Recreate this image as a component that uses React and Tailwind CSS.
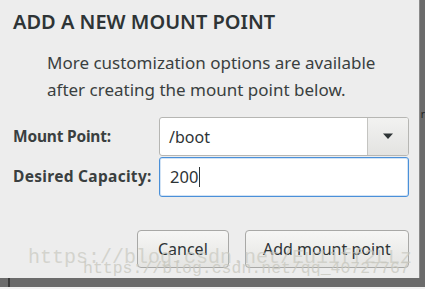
export default function App() {
  return (
    <div className="w-[425px] h-[289px] flex flex-col bg-[#6b6b6b] overflow-hidden" style={{ fontFamily: '"Noto Sans", "DejaVu Sans", sans-serif' }}>
      <div className="flex h-[278px]">
        {/* Dialog */}
        <div className="relative w-[419px] h-[278px] bg-[#ededed] text-[#2e3436]">
          <h1 className="ml-[13px] pt-[10px] text-[20px] leading-[24px] font-semibold">
            ADD A NEW MOUNT POINT
          </h1>
          <p className="ml-[47px] mt-[15px] text-[17px] leading-[27px] text-[#3a3f40]">
            More customization options are available
            <br />
            after creating the mount point below.
          </p>

          <div className="mt-[14px] grid grid-cols-[159px_250px] gap-y-[1px] items-center">
            <label className="ml-[13px] text-[15.5px] font-bold text-[#3a3f40] tracking-[-0.2px]">Mount Point:</label>
            <div className="h-[39px] flex rounded-[3px] border border-[#b6b6b3] bg-white overflow-hidden">
              <div className="flex-1 flex items-center pl-[9px] text-[16px]">/boot</div>
              <div className="w-[41px] flex items-center justify-center border-l border-[#c4c4c1] bg-gradient-to-b from-[#f2f2f1] to-[#e3e3e1]">
                <svg width="12" height="7" viewBox="0 0 12 7">
                  <path d="M1 0.5 L11 0.5 L6 6 Z" fill="#2e3436" />
                </svg>
              </div>
            </div>
            <label className="ml-[13px] text-[15.5px] font-bold text-[#3a3f40] tracking-[0.3px]">Desired Capacity:</label>
            <div className="h-[40px] flex items-center pl-[10px] rounded-[3px] border border-[#4a90d9] bg-white text-[16.5px] shadow-[inset_0_0_0_1px_rgba(74,144,217,0.25)]">
              200<span className="ml-[1px] w-[1px] h-[20px] bg-[#2e3436]" />
            </div>
          </div>

          <div className="mt-[33px] mr-[10px] flex justify-end gap-[16px]">
            <button className="w-[92px] h-[38px] rounded-[4px] border border-[#a8a8a6] bg-gradient-to-b from-[#f6f6f5] to-[#e4e4e2] text-[16px] text-[#2e3436]">
              Cancel
            </button>
            <button className="w-[164px] h-[38px] rounded-[4px] border border-[#a8a8a6] bg-gradient-to-b from-[#f6f6f5] to-[#e4e4e2] text-[16px] text-[#2e3436]">
              Add mount point
            </button>
          </div>

          {/* watermarks */}
          <div className="absolute left-[28px] top-[246px] text-[20px] leading-[24px] text-[#c8c8bf]/70 whitespace-nowrap pointer-events-none" style={{ fontFamily: '"Liberation Mono", monospace' }}>
            https://blog.csdn.net/Eu1iff2LLz
          </div>
          <div className="absolute left-[83px] top-[259px] text-[16.5px] leading-[20px] text-[#c8c8bf]/80 whitespace-nowrap pointer-events-none" style={{ fontFamily: '"Liberation Mono", monospace' }}>
            https://blog.csdn.net/qq_40727767
          </div>
        </div>
        {/* right strip */}
        <div className="flex-1 border-l border-[#8a8a8a] text-[10px] leading-none text-[#222] pt-[109px] pl-[1px]">r</div>
      </div>
      <div className="h-[9px] bg-[#6b6b6b] flex">
        <div className="ml-[8px] w-[2px] h-full bg-[#3a3a3a]" />
      </div>
      <div className="h-[2px] bg-[#f2f2f2]" />
    </div>
  );
}
